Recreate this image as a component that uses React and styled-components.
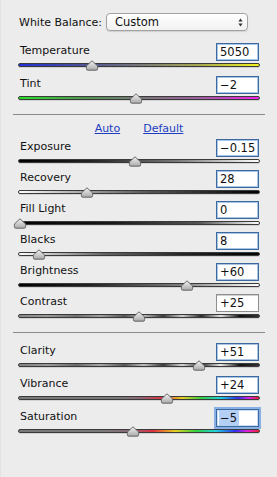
import React from 'react';
import styled, { createGlobalStyle } from 'styled-components';

const GlobalStyle = createGlobalStyle`
  html, body {
    margin: 0;
    padding: 0;
    background: #ececec;
  }
  body {
    font-family: "DejaVu Sans", "Noto Sans", sans-serif;
    -webkit-font-smoothing: antialiased;
  }
`;

const tracks = {
  temperature: 'linear-gradient(to right, #2030d8 0%, #4a4f9a 25%, #77777a 50%, #a8a850 75%, #f4f420 100%)',
  tint: 'linear-gradient(to right, #28e028 0%, #4e9a4e 25%, #777 50%, #a060a0 75%, #f424ec 100%)',
  dark: 'linear-gradient(to right, #000 0%, #222 30%, #777 65%, #fff 100%)',
  light: 'linear-gradient(to right, #fff 0%, #bbb 20%, #555 55%, #000 100%)',
  fill: 'linear-gradient(to right, #000 0%, #1a1a1a 40%, #555 75%, #fff 100%)',
  blacks: 'linear-gradient(to right, #fff 0%, #ddd 8%, #666 35%, #222 70%, #000 100%)',
  contrast:
    'linear-gradient(to right, #888 0%, #999 12%, #707070 24%, #a0a0a0 34%, #555 44%, #bbb 52%, #3a3a3a 60%, #cfcfcf 68%, #2a2a2a 76%, #e4e4e4 84%, #111 92%, #333 100%)',
  clarity:
    'linear-gradient(to right, #808080 0%, #9a9a9a 12%, #6a6a6a 24%, #a8a8a8 34%, #555 44%, #c0c0c0 52%, #3a3a3a 60%, #d6d6d6 68%, #2a2a2a 76%, #ececec 84%, #111 92%, #333 100%)',
  vibrance:
    'linear-gradient(to right, #7a7a7a 0%, #7a7a7a 40%, #8a6878 50%, #e03040 60%, #e8d020 68%, #30d040 76%, #20d0e0 84%, #3030f0 91%, #e020e0 96%, #f02030 100%)',
  saturation:
    'linear-gradient(to right, #7a7a7a 0%, #7a7a7a 35%, #8a6878 46%, #e03040 56%, #e8d020 65%, #30d040 74%, #20d0e0 82%, #3030f0 90%, #e020e0 95%, #f02030 100%)',
};

const section1 = [
  { label: 'Temperature', value: '5050', pos: 0.303, track: 'temperature' },
  { label: 'Tint', value: '−2', pos: 0.488, track: 'tint' },
];

const section2 = [
  { label: 'Exposure', value: '−0.15', pos: 0.483, track: 'dark' },
  { label: 'Recovery', value: '28', pos: 0.283, track: 'light' },
  { label: 'Fill Light', value: '0', pos: 0.004, track: 'fill' },
  { label: 'Blacks', value: '8', pos: 0.085, track: 'blacks' },
  { label: 'Brightness', value: '+60', pos: 0.701, track: 'dark' },
  { label: 'Contrast', value: '+25', pos: 0.499, track: 'contrast', plain: true },
];

const section3 = [
  { label: 'Clarity', value: '+51', pos: 0.752, track: 'clarity' },
  { label: 'Vibrance', value: '+24', pos: 0.616, track: 'vibrance' },
  { label: 'Saturation', value: '−5', pos: 0.476, track: 'saturation', focused: true },
];

function Thumb() {
  return (
    <svg width="13" height="11" viewBox="0 0 13 11">
      <defs>
        <linearGradient id="thumbFill" x1="0" y1="0" x2="0" y2="1">
          <stop offset="0" stopColor="#f2f2f2" />
          <stop offset="1" stopColor="#a9a9a9" />
        </linearGradient>
      </defs>
      <path
        d="M6.5 0.8 L12.2 6 L12.2 8.6 Q12.2 10.2 10.6 10.2 L2.4 10.2 Q0.8 10.2 0.8 8.6 L0.8 6 Z"
        fill="url(#thumbFill)"
        stroke="#5a5a5a"
        strokeWidth="0.9"
      />
    </svg>
  );
}

function SelectArrows() {
  return (
    <svg width="5" height="9" viewBox="0 0 5 9">
      <path d="M2.5 0.5 L4.6 3.5 L0.4 3.5 Z" fill="#333" />
      <path d="M2.5 8.5 L4.6 5.5 L0.4 5.5 Z" fill="#333" />
    </svg>
  );
}

function Slider({ item, spacing }) {
  return (
    <Block $spacing={spacing}>
      <Header>
        <Label>{item.label}</Label>
        <ValueBox $plain={item.plain} $focused={item.focused}>
          {item.focused ? <Selection>{item.value}</Selection> : item.value}
        </ValueBox>
      </Header>
      <Track style={{ background: tracks[item.track] }}>
        <ThumbHolder style={{ left: `${item.pos * 100}%` }}>
          <Thumb />
        </ThumbHolder>
      </Track>
    </Block>
  );
}

export default function App() {
  return (
    <>
      <GlobalStyle />
      <Panel>
        <WBRow>
          <WBLabel>White Balance:</WBLabel>
          <Select>
            <span>Custom</span>
            <SelectArrows />
          </Select>
        </WBRow>
        {section1.map((item) => (
          <Slider key={item.label} item={item} spacing={8} />
        ))}
        <Separator $top={6} />
        <Links>
          <LinkText>Auto</LinkText>
          <LinkText>Default</LinkText>
        </Links>
        {section2.map((item) => (
          <Slider key={item.label} item={item} spacing={6} />
        ))}
        <Separator $top={8} $bottom={9} />
        {section3.map((item) => (
          <Slider key={item.label} item={item} spacing={8} />
        ))}
      </Panel>
    </>
  );
}

const Panel = styled.div`
  display: flex;
  flex-direction: column;
  width: 277px;
  height: 477px;
  box-sizing: border-box;
  padding: 13px 17px 0 17px;
  background: #ececec;
  border-left: 1px solid #e3e3e3;
  color: #111;
  font-size: 11px;
  overflow: hidden;
`;

const WBRow = styled.div`
  display: flex;
  align-items: center;
  flex-shrink: 0;
  height: 18px;
  margin-bottom: 11px;
`;

const WBLabel = styled.span`
  margin-left: 1px;
  width: 87px;
  white-space: nowrap;
`;

const Select = styled.div`
  display: flex;
  align-items: center;
  justify-content: space-between;
  box-sizing: border-box;
  width: 142px;
  height: 18px;
  padding: 0 4px 0 8px;
  border: 1px solid #a2a2a2;
  border-radius: 4px;
  background: linear-gradient(to bottom, #ffffff, #f1f1f1);
  box-shadow: 0 1px 1px rgba(0, 0, 0, 0.12);
  font-size: 11.5px;
`;

const Block = styled.div`
  flex-shrink: 0;
  margin-bottom: ${(p) => p.$spacing}px;
`;

const Header = styled.div`
  display: flex;
  align-items: center;
  justify-content: space-between;
  height: 19px;
  margin-bottom: 2px;
`;

const Label = styled.span`
  margin-left: 2px;
  margin-top: -2px;
`;

const ValueBox = styled.div`
  box-sizing: border-box;
  width: 43px;
  height: 18px;
  margin-right: 1px;
  padding: 0 3px;
  display: flex;
  align-items: center;
  background: #fff;
  font-size: 11.5px;
  border: 1px solid ${(p) => (p.$plain ? '#8e8e8e' : '#3b6aa0')};
  box-shadow: ${(p) =>
    p.$focused
      ? '0 0 0 2px #88b0e4, inset 0 0 0 1px #c9dcf3'
      : p.$plain
      ? 'inset 0 1px 0 #d0d0d0'
      : 'inset 0 0 0 1px #a9c4e4'};
`;

const Selection = styled.span`
  background: #b3cff3;
  padding: 1px 2px 1px 1px;
  margin-left: -1px;
`;

const Track = styled.div`
  position: relative;
  box-sizing: border-box;
  height: 4px;
  border: 1px solid #3a3a3a;
  border-radius: 2px;
  box-shadow: 0 1px 0 #d2d2d2;
`;

const ThumbHolder = styled.div`
  position: absolute;
  top: -4px;
  width: 13px;
  height: 11px;
  transform: translateX(-50%);
  line-height: 0;
`;

const Separator = styled.div`
  flex-shrink: 0;
  height: 1px;
  margin: ${(p) => p.$top}px -5px ${(p) => p.$bottom || 0}px -5px;
  background: #8a8a8a;
`;

const Links = styled.div`
  display: flex;
  flex-shrink: 0;
  justify-content: center;
  gap: 23px;
  height: 23px;
  padding-top: 7px;
  box-sizing: border-box;
  line-height: 13px;
`;

const LinkText = styled.span`
  color: #1d3cc0;
  text-decoration: underline;
`;
